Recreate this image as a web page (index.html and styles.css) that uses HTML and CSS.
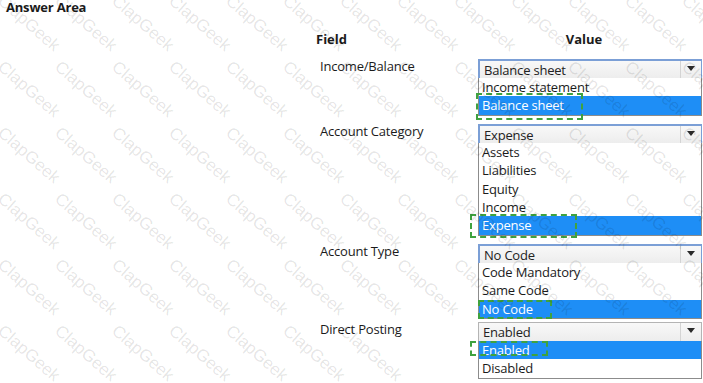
FILE: index.html
```html
<!DOCTYPE html>
<html lang="en">
<head>
  <meta charset="UTF-8">
  <meta name="viewport" content="width=device-width, initial-scale=1.0">
  <title>Answer Area</title>
  <link rel="stylesheet" href="styles.css">
</head>
<body>
  <h1 class="title">Answer Area</h1>

  <!-- Tabla de campos y valores -->
  <div class="answer-table">
    <div class="head-row">
      <div class="head">Field</div>
      <div class="head head-value">Value</div>
    </div>

    <!-- Income/Balance -->
    <div class="row">
      <div class="label">Income/Balance</div>
      <div class="dropdown focused">
        <div class="select"><span class="current">Balance sheet</span><span class="arrow"></span></div>
        <ul class="options">
          <li>Income statement</li>
          <li class="selected">Balance sheet<span class="mark mark-1"></span></li>
        </ul>
      </div>
    </div>

    <!-- Account Category -->
    <div class="row">
      <div class="label">Account Category</div>
      <div class="dropdown focused">
        <div class="select"><span class="current">Expense</span><span class="arrow"></span></div>
        <ul class="options">
          <li>Assets</li>
          <li>Liabilities</li>
          <li>Equity</li>
          <li>Income</li>
          <li class="selected">Expense<span class="mark mark-2"></span></li>
        </ul>
      </div>
    </div>

    <!-- Account Type -->
    <div class="row">
      <div class="label">Account Type</div>
      <div class="dropdown focused">
        <div class="select"><span class="current">No Code</span><span class="arrow"></span></div>
        <ul class="options">
          <li>Code Mandatory</li>
          <li>Same Code</li>
          <li class="selected">No Code<span class="mark mark-3"></span></li>
        </ul>
      </div>
    </div>

    <!-- Direct Posting -->
    <div class="row row-tight">
      <div class="label">Direct Posting</div>
      <div class="dropdown">
        <div class="select"><span class="current">Enabled</span><span class="arrow"></span></div>
        <ul class="options">
          <li class="selected">Enabled<span class="mark mark-4"></span></li>
          <li>Disabled</li>
        </ul>
      </div>
    </div>
  </div>

  <!-- Marca de agua -->
  <div class="watermark">
    <div class="watermark-grid" id="watermark"></div>
  </div>

  <script src="script.js"></script>
</body>
</html>
```

FILE: styles.css
```css
/* RESET */
* {
  margin: 0;
  padding: 0;
  box-sizing: border-box;
}

body {
  font-family: "Open Sans", "Noto Sans", sans-serif;
  background-color: #fff;
  color: #1b1b1b;
  width: 703px;
  height: 383px;
  overflow: hidden;
  position: relative;
}

/* TITULO */
.title {
  font-size: 13px;
  font-weight: 700;
  line-height: 14px;
  padding-left: 6px;
  letter-spacing: -0.2px;
}

/* TABLA */
.answer-table {
  margin: 17px 0 0 316px;
  width: 387px;
}

.head-row,
.row {
  display: grid;
  grid-template-columns: 162px 224px;
}

.head {
  font-size: 13px;
  font-weight: 700;
  line-height: 16px;
}
.head-value {
  text-align: center;
  padding-right: 12px;
}

.row {
  margin-top: 8px;
}
.head-row + .row {
  margin-top: 12px;
}
.row-tight {
  margin-top: 3px;
}

.label {
  font-size: 13px;
  line-height: 15px;
  letter-spacing: -0.2px;
  padding-left: 4px;
}

/* DESPLEGABLES */
.dropdown {
  font-size: 13px;
  letter-spacing: -0.2px;
}

.select {
  height: 19px;
  display: flex;
  justify-content: space-between;
  border: 1px solid #b4b4b4;
  border-bottom: none;
  background: linear-gradient(#f8f8f8, #ededed);
  overflow: hidden;
}
.focused .select {
  border-color: #7b9fd6;
  border-width: 2px 1px 0 2px;
}

.current {
  line-height: 15px;
  padding: 2px 0 0 4px;
  color: #222;
}

.arrow {
  width: 21px;
  border-left: 1px solid #d4d4d4;
  position: relative;
}
.arrow::after {
  content: "";
  position: absolute;
  left: 6px;
  top: 5px;
  border-left: 4px solid transparent;
  border-right: 4px solid transparent;
  border-top: 5px solid #2a2a2a;
}

.options {
  list-style: none;
  background-color: #fff;
  border: 1px solid #8c8c8c;
  border-top: none;
}
.options li {
  line-height: 18.4px;
  padding-left: 3px;
  position: relative;
}
.options li.selected {
  background-color: #1e8ef6;
  color: #fff;
}

/* Recuadros verdes discontinuos */
.mark {
  position: absolute;
  border: 2px dashed #3fa23f;
  pointer-events: none;
}
.mark-1 { left: -3px; top: -3px; width: 107px; height: 27px; }
.mark-2 { left: -9px; top: -2px; width: 107px; height: 24px; }
.mark-3 { left: -1px; top: 0; width: 74px; height: 19px; }
.mark-4 { left: -9px; top: 0; width: 78px; height: 15px; }

/* MARCA DE AGUA */
.watermark {
  position: absolute;
  top: 0;
  left: 0;
  right: 0;
  bottom: 0;
  overflow: hidden;
  pointer-events: none;
}
.watermark-grid {
  margin: -8px 0 0 6px;
  display: grid;
  grid-template-columns: repeat(13, 57px);
  grid-auto-rows: 66px;
}
.watermark-grid span {
  font-family: "Liberation Sans", Arial, sans-serif;
  font-size: 17px;
  line-height: 17px;
  color: rgba(0, 0, 0, 0.11);
  white-space: nowrap;
  transform: rotate(41deg);
  transform-origin: 0 0;
}
```

FILE: script.js
```js
// Rellena la marca de agua repetida
var wm = document.getElementById('watermark');
for (var i = 0; i < 12 * 6; i++) {
  var s = document.createElement('span');
  s.textContent = 'ClapGeek';
  wm.appendChild(s);
}
```
